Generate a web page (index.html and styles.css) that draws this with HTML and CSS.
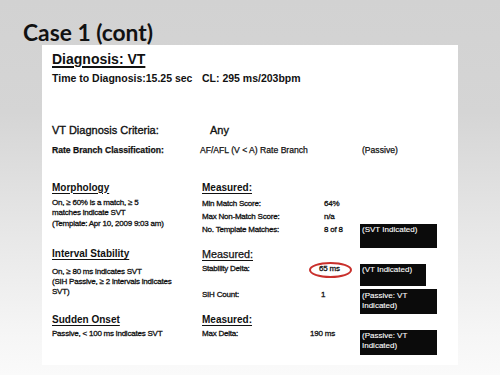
FILE: index.html
```html
<!DOCTYPE html>
<html lang="en">
<head>
<meta charset="utf-8">
<title>Case 1 (cont)</title>
<link rel="stylesheet" href="styles.css">
</head>
<body>
<div class="slide">
  <h1 class="title">Case 1 (cont)</h1>
  <div class="paper">
    <h2 class="diag">Diagnosis: VT</h2>
    <div class="timeline"><span>Time to Diagnosis:15.25 sec</span><span>CL: 295 ms/203bpm</span></div>
    <div class="criteria"><span>VT Diagnosis Criteria:</span><span>Any</span></div>
    <div class="rate"><span class="b">Rate Branch Classification:</span><span>AF/AFL (V &lt; A) Rate Branch</span><span>(Passive)</span></div>

    <section class="crit morph">
      <div class="desc">
        <h3 class="head">Morphology</h3>
        <p>On, ≥ 60% is a match, ≥ 5<br>matches indicate SVT<br>(Template: Apr 10, 2009 9:03 am)</p>
      </div>
      <div class="meas">
        <h3 class="head">Measured:</h3>
        <div class="rows">
          <div class="row"><span>Min Match Score:</span><span class="val">64%</span><span></span></div>
          <div class="row"><span>Max Non-Match Score:</span><span class="val">n/a</span><span></span></div>
          <div class="row"><span>No. Template Matches:</span><span class="val">8 of 8</span><span class="box box1">(SVT Indicated)</span></div>
        </div>
      </div>
    </section>

    <section class="crit interval">
      <div class="desc">
        <h3 class="head">Interval Stability</h3>
        <p>On, ≥ 80 ms indicates SVT<br>(SIH Passive, ≥ 2 intervals indicates<br>SVT)</p>
      </div>
      <div class="meas">
        <h3 class="head light">Measured:</h3>
        <div class="rows">
          <div class="row"><span>Stability Delta:</span><span class="val circled">65 ms</span><span class="box box2">(VT Indicated)</span></div>
          <div class="row row-sih"><span>SIH Count:</span><span class="val nudge">1</span><span class="box box3">(Passive: VT<br>Indicated)</span></div>
        </div>
      </div>
    </section>

    <section class="crit onset">
      <div class="desc">
        <h3 class="head">Sudden Onset</h3>
        <p>Passive, &lt; 100 ms indicates SVT</p>
      </div>
      <div class="meas">
        <h3 class="head">Measured:</h3>
        <div class="rows">
          <div class="row"><span>Max Delta:</span><span class="val wide">190 ms</span><span class="box box4">(Passive: VT<br>Indicated)</span></div>
        </div>
      </div>
    </section>
  </div>
</div>
</body>
</html>
```
FILE: styles.css
```css
html, body {
  margin: 0;
  padding: 0;
}
body {
  width: 500px;
  height: 375px;
  overflow: hidden;
  background: linear-gradient(180deg, #d2d2d2 0%, #d5d5d5 30%, #e6e6e6 60%, #f6f6f6 90%, #fafafa 100%);
}
.slide {
  height: 375px;
  padding-top: 19px;
  box-sizing: border-box;
}
.title {
  margin: 0 0 0 23px;
  font-family: "Lato", "Open Sans", sans-serif;
  font-weight: 700;
  font-size: 22.8px;
  line-height: 26px;
  color: #111;
}
.paper {
  margin-left: 42px;
  width: 416px;
  height: 320px;
  background: #fff;
  padding: 6px 0 0 10px;
  box-sizing: border-box;
  font-family: "Liberation Sans", Arial, sans-serif;
  color: #111;
}
.diag {
  margin: 0;
  font-size: 14px;
  line-height: 16px;
  font-weight: 700;
  text-decoration: underline;
  text-decoration-thickness: 1.5px;
  text-underline-offset: 2px;
}
.timeline {
  margin-top: 4px;
  display: grid;
  grid-template-columns: 150px auto;
  font-size: 10.5px;
  line-height: 14px;
  font-weight: 700;
}
.criteria {
  margin-top: 38px;
  display: grid;
  grid-template-columns: 158px auto;
  font-size: 11px;
  line-height: 14px;
  -webkit-text-stroke: 0.35px #111;
}
.rate {
  margin-top: 7px;
  display: grid;
  grid-template-columns: 148px 162px auto;
  font-size: 8.6px;
  line-height: 12px;
  -webkit-text-stroke: 0.25px #111;
}
.rate .b {
  font-weight: 700;
}
.crit {
  display: grid;
  grid-template-columns: 150px auto;
  align-items: start;
}
.morph {
  margin-top: 25.5px;
}
.head {
  margin: 0;
  font-size: 10px;
  line-height: 12px;
  font-weight: 700;
  text-decoration: underline;
  text-underline-offset: 1.5px;
}
.head.light {
  font-weight: 400;
  font-size: 10.8px;
  -webkit-text-stroke: 0.25px #111;
}
.desc p {
  margin: 0;
  font-size: 8px;
  letter-spacing: -0.22px;
  -webkit-text-stroke: 0.3px #111;
}
.morph .desc p {
  margin-top: 4px;
  line-height: 10.5px;
}
.interval .desc p {
  margin-top: 6.5px;
  line-height: 10px;
}
.onset .desc p {
  margin-top: 3.3px;
  line-height: 10px;
}
.row {
  display: grid;
  grid-template-columns: 122px 36px 77px;
  align-items: start;
  font-size: 8px;
  letter-spacing: -0.22px;
  line-height: 12px;
  -webkit-text-stroke: 0.3px #111;
}
.morph .rows {
  margin-top: 4.6px;
}
.morph .row + .row {
  margin-top: 1px;
}
.interval .rows {
  margin-top: 3px;
}
.row-sih {
  margin-top: 3px;
}
.onset .rows {
  margin-top: 2.5px;
}
.val {
  white-space: nowrap;
}
.val.nudge {
  margin-left: -3px;
}
.val.wide {
  margin-left: -14px;
}
.circled {
  position: relative;
  margin-left: -5px;
}
.circled::after {
  content: "";
  position: absolute;
  left: -10px;
  top: -1.5px;
  width: 43px;
  height: 16px;
  box-sizing: border-box;
  border: 2px solid #c9302c;
  border-radius: 50%;
}
.box {
  display: block;
  background: #0b0b0b;
  color: #fff;
  -webkit-text-stroke: 0.1px #fff;
  font-size: 8px;
  letter-spacing: 0;
  line-height: 10px;
  padding: 1px 2px;
  box-sizing: border-box;
}
.box1 {
  margin-top: 0;
  height: 24px;
}
.box2 {
  margin-top: 0.7px;
  height: 22px;
  width: 66px;
}
.box3 {
  height: 25px;
  padding-top: 2px;
}
.box4 {
  margin-top: 1.5px;
  height: 25px;
}
```
